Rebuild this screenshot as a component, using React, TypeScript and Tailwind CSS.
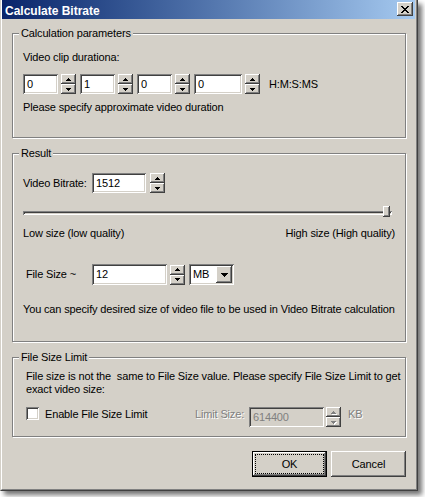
import React from 'react';

const raised = 'shadow-[inset_-1px_-1px_0_#404040,inset_1px_1px_0_#ffffff,inset_-2px_-2px_0_#808080]';
const sunken = 'shadow-[inset_1px_1px_0_#808080,inset_-1px_-1px_0_#ffffff,inset_2px_2px_0_#404040,inset_-2px_-2px_0_#d4d0c8]';
const grayed = 'text-[#808080] [text-shadow:1px_1px_0_#ffffff]';

function Arrow({ dir, disabled }: { dir: 'up' | 'down'; disabled?: boolean }) {
  const d = dir === 'up' ? 'M2 0h1v1H2zM1 1h3v1H1zM0 2h5v1H0z' : 'M0 0h5v1H0zM1 1h3v1H1zM2 2h1v1H2z';
  return (
    <svg width="6" height="4" viewBox="0 0 6 4" shapeRendering="crispEdges" className="ml-px">
      {disabled && <path d={d} fill="#ffffff" transform="translate(1 1)" />}
      <path d={d} fill={disabled ? '#808080' : '#000000'} />
    </svg>
  );
}

function Spin({ disabled, className = '' }: { disabled?: boolean; className?: string }) {
  return (
    <div className={`flex h-[20px] w-[15px] shrink-0 flex-col ${className}`}>
      <div className={`flex h-[10px] items-center justify-center bg-[#d4d0c8] pt-px ${raised}`}>
        <Arrow dir="up" disabled={disabled} />
      </div>
      <div className={`flex h-[10px] items-center justify-center bg-[#d4d0c8] pt-px ${raised}`}>
        <Arrow dir="down" disabled={disabled} />
      </div>
    </div>
  );
}

function Edit({ value, disabled, className = '' }: { value: string; disabled?: boolean; className?: string }) {
  return (
    <div
      className={`flex shrink-0 items-center pl-[4px] ${sunken} ${
        disabled ? 'bg-[#d4d0c8] text-[#808080]' : 'bg-white'
      } ${className}`}
    >
      {value}
    </div>
  );
}

function Group({ label, className = '', children }: { label: string; className?: string; children: React.ReactNode }) {
  return (
    <div className={`relative border border-[#808080] shadow-[inset_1px_1px_0_#ffffff,1px_1px_0_#ffffff] ${className}`}>
      <span className="absolute left-[6px] top-[-7px] bg-[#d4d0c8] px-[2px]">{label}</span>
      {children}
    </div>
  );
}

export default function App() {
  return (
    <div className="h-[497px] w-[425px] bg-white text-[11px] leading-[13px] tracking-[-0.15px] text-black [font-family:'Liberation_Sans',Arial,sans-serif]">
      <div className="h-[491px] w-[418px] border-b border-l border-r border-b-[#404040] border-l-[#d4d0c8] border-r-[#404040] bg-[#d4d0c8] shadow-[4px_4px_5px_rgba(0,0,0,0.55)]">
        <div className="flex h-full flex-col border-b border-l border-r border-b-[#808080] border-l-white border-r-[#808080] pr-px">
          {/* caption */}
          <div className="flex h-[19px] items-start justify-between bg-linear-to-r from-[#0a246a] to-[#a6caf0]">
            <span className="pl-[3px] pt-[5px] text-[12px] font-bold tracking-normal text-white">Calculate Bitrate</span>
            <div className={`mr-[2px] mt-[2px] flex h-[14px] w-[16px] items-center justify-center bg-[#d4d0c8] ${raised}`}>
              <svg width="8" height="7" viewBox="0 0 8 7" shapeRendering="crispEdges">
                <path
                  d="M0 0h2v1H0zM6 0h2v1H6zM1 1h2v1H1zM5 1h2v1H5zM2 2h4v1H2zM3 3h2v1H3zM2 4h4v1H2zM1 5h2v1H1zM5 5h2v1H5zM0 6h2v1H0zM6 6h2v1H6z"
                  fill="#000000"
                />
              </svg>
            </div>
          </div>

          <div className="flex flex-col pl-[10px] pr-[9px] pt-[14px]">
            <Group label="Calculation parameters" className="h-[105px]">
              <div className="pl-[10px] pt-[17px]">
                <div>Video clip durationa:</div>
                <div className="mt-[10px] flex h-[20px] items-center">
                  <Edit value="0" className="h-[20px] w-[35px]" />
                  <Spin className="ml-[3px]" />
                  <Edit value="1" className="ml-[4px] h-[20px] w-[35px]" />
                  <Spin className="ml-[3px]" />
                  <Edit value="0" className="ml-[4px] h-[20px] w-[35px]" />
                  <Spin className="ml-[3px]" />
                  <Edit value="0" className="ml-[4px] h-[20px] w-[48px]" />
                  <Spin className="ml-[3px]" />
                  <span className="ml-[9px]">H:M:S:MS</span>
                </div>
                <div className="mt-[7px]">Please specify approximate video duration</div>
              </div>
            </Group>

            <Group label="Result" className="mt-[15px] h-[189px]">
              <div className="pl-[10px] pr-[10px] pt-[19px]">
                <div className="flex h-[20px] items-center">
                  <span className="w-[69px]">Video Bitrate:</span>
                  <Edit value="1512" className="h-[20px] w-[54px]" />
                  <Spin className="ml-[4px]" />
                </div>

                {/* trackbar */}
                <div className="relative mt-[12px] h-[12px] w-[369px]">
                  <div className={`absolute left-0 right-0 top-[6px] h-[4px] ${sunken}`} />
                  <div className={`absolute left-[360px] top-px h-[11px] w-[7px] bg-[#d4d0c8] ${raised}`} />
                </div>

                <div className="mt-[10px] flex justify-between">
                  <span>Low size (low quality)</span>
                  <span>High size (High quality)</span>
                </div>

                <div className="mt-[24px] flex h-[21px] items-center">
                  <span className="w-[69px] pl-[3px]">File Size ~</span>
                  <Edit value="12" className="h-[21px] w-[75px]" />
                  <Spin className="ml-[3px]" />
                  <div className={`ml-[4px] flex h-[21px] w-[45px] items-center bg-white pl-[4px] pr-[2px] ${sunken}`}>
                    <span className="flex-1">MB</span>
                    <div className={`flex h-[17px] w-[16px] items-center justify-center bg-[#d4d0c8] ${raised}`}>
                      <svg width="7" height="4" viewBox="0 0 7 4" shapeRendering="crispEdges">
                        <path d="M0 0h7v1H0zM1 1h5v1H1zM2 2h3v1H2zM3 3h1v1H3z" fill="#000000" />
                      </svg>
                    </div>
                  </div>
                </div>

                <div className="mt-[18px]">
                  You can specify desired size of video file to be used in Video Bitrate calculation
                </div>
              </div>
            </Group>

            <Group label="File Size Limit" className="mt-[15px] h-[80px]">
              <div className="pl-[13px] pt-[12px]">
                <div className="whitespace-pre">
                  {'File size is not the  same to File Size value. Please specify File Size Limit to get\nexact video size:'}
                </div>
                <div className="mt-[11px] flex items-start">
                  <div className={`h-[13px] w-[13px] shrink-0 bg-white ${sunken}`} />
                  <span className="ml-[6px] mt-px w-[150px]">Enable File Size Limit</span>
                  <span className={`mt-px w-[54px] ${grayed}`}>Limit Size:</span>
                  <Edit value="614400" disabled className="h-[20px] w-[75px]" />
                  <Spin disabled className="ml-[2px]" />
                  <span className={`ml-[7px] mt-px ${grayed}`}>KB</span>
                </div>
              </div>
            </Group>

            <div className="mt-[14px] flex justify-end gap-[4px]">
              <div className="relative h-[26px] w-[75px] border border-black">
                <div className={`flex h-full items-center justify-center bg-[#d4d0c8] ${raised}`}>OK</div>
                <div className="absolute inset-[2px] border border-dotted border-black" />
              </div>
              <div className={`flex h-[26px] w-[75px] items-center justify-center bg-[#d4d0c8] ${raised}`}>Cancel</div>
            </div>
          </div>
        </div>
      </div>
    </div>
  );
}
